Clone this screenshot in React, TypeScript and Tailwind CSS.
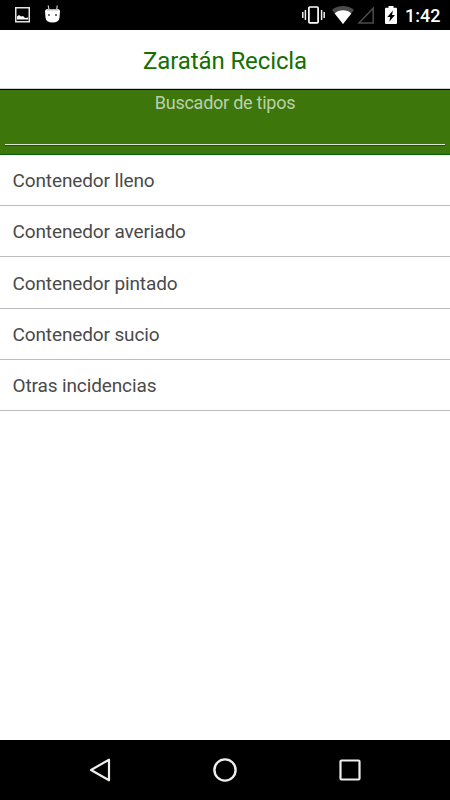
const incidentTypes = [
  "Contenedor lleno",
  "Contenedor averiado",
  "Contenedor pintado",
  "Contenedor sucio",
  "Otras incidencias",
];

function ImageIcon() {
  return (
    <svg width="16" height="16" viewBox="0 0 16 16" aria-hidden="true">
      <rect x="0.75" y="0.75" width="13.5" height="14" fill="none" stroke="#e4e4e0" strokeWidth="1.5" />
      <path d="M2 12.500V9.500L4 8l2 1.500L8 9l2 2 3-.5v2z" fill="#fff" />
    </svg>
  );
}

function AndroidIcon() {
  return (
    <svg width="16" height="18" viewBox="0 0 16 18" aria-hidden="true">
      <path d="M3.200 0.500l.7 4M12.300 0.500l-.7 4" stroke="#ccc" strokeWidth="1.200" />
      <path d="M0 6.500Q0 4 2.500 4h10Q15 4 15 6.500l-.5 6Q14 17.500 7.500 17.500T.5 12.500z" fill="#fff" />
      <path d="M1.500 5.500Q2 4 3.500 4h8q1.500 0 2 1.500z" fill="#b8b8b8" />
      <circle cx="4" cy="10" r="1" fill="#444" />
      <circle cx="11" cy="10" r="1" fill="#444" />
    </svg>
  );
}

function VibrateIcon() {
  return (
    <svg width="24" height="18" viewBox="0 0 24 18" aria-hidden="true">
      <rect x="6.900" y="1" width="9.200" height="15.800" rx="1" fill="none" stroke="#fff" strokeWidth="1.700" />
      <path d="M.8 6v6M3.400 4v10M19.600 4v10M22.200 6v6" stroke="#eee" strokeWidth="1.500" />
    </svg>
  );
}

function WifiIcon() {
  return (
    <svg width="22" height="18" viewBox="0 0 22 18" aria-hidden="true">
      <path d="M11 18L0 4Q4.500 0 11 0t11 4z" fill="#4b4b4b" />
      <path d="M11 18L2.700 7.500Q6 4.300 11 4.300t8.300 3.200z" fill="#fff" />
    </svg>
  );
}

function SignalIcon() {
  return (
    <svg width="18" height="18" viewBox="0 0 18 18" aria-hidden="true">
      <path d="M2 16.900L16.200 2.200v14.700z" fill="none" stroke="#4b4b4b" strokeWidth="1.500" />
    </svg>
  );
}

function BatteryIcon() {
  return (
    <svg width="12" height="18" viewBox="0 0 12 18" aria-hidden="true">
      <path d="M3.500 0h5v1.700H11q1 0 1 1V17q0 1-1 1H1q-1 0-1-1V2.700q0-1 1-1h2.500z" fill="#fff" />
      <path d="M8 4.500L2.300 11h2.900l-.9 4.700L9.900 9H7z" fill="#000" />
    </svg>
  );
}

function StatusBar() {
  return (
    <div className="flex h-[30px] shrink-0 items-center bg-black pl-[15px] pr-[10px] text-white">
      <ImageIcon />
      <div className="-mt-[3px] ml-[14px]">
        <AndroidIcon />
      </div>
      <div className="ml-auto flex items-center">
        <VibrateIcon />
        <div className="ml-[6px]">
          <WifiIcon />
        </div>
        <div className="ml-[3px]">
          <SignalIcon />
        </div>
        <div className="ml-[10px]">
          <BatteryIcon />
        </div>
        <span className="ml-[8px] w-[35px] whitespace-nowrap pt-px text-[18px] font-medium leading-[30px]">1:42</span>
      </div>
    </div>
  );
}

function NavigationBar() {
  return (
    <nav className="flex h-[60px] shrink-0 items-center justify-between bg-black px-[88px]">
      <button aria-label="Atrás">
        <svg width="24" height="24" viewBox="0 0 24 24" fill="none" stroke="#f0eeec" strokeWidth="2.200" strokeLinejoin="round">
          <path d="M3 12L21 1.700v20.600z" />
        </svg>
      </button>
      <button aria-label="Inicio">
        <svg width="24" height="24" viewBox="0 0 24 24" fill="none" stroke="#f0eeec" strokeWidth="2.400">
          <circle cx="12" cy="12" r="10.600" />
        </svg>
      </button>
      <button aria-label="Recientes">
        <svg width="24" height="24" viewBox="0 0 24 24" fill="none" stroke="#f0eeec" strokeWidth="2.200">
          <rect x="2.500" y="2.500" width="19" height="19" rx="1" />
        </svg>
      </button>
    </nav>
  );
}

export default function App() {
  return (
    <div className="flex h-[800px] w-[450px] flex-col overflow-hidden bg-white font-[Roboto,sans-serif]">
      <StatusBar />

      <header className="flex h-[59px] shrink-0 items-center justify-center border-b border-[#d0d0d0] pt-[3px]">
        <h1 className="text-[24px] leading-[30px] tracking-[-0.1px] text-[#147000]">Zaratán Recicla</h1>
      </header>

      <section className="flex h-[66px] shrink-0 flex-col border-t border-b border-t-black border-b-[#045f08] bg-[#3d760a] px-[5px]">
        <label
          htmlFor="search"
          className="h-[26px] text-center text-[18px] leading-[26px] tracking-[-0.25px] text-[#bdd0ab]"
        >
          Buscador de tipos
        </label>
        <input
          id="search"
          type="text"
          className="h-[29px] w-full border-b border-[#dce4d3] bg-transparent text-white shadow-[0_1px_0_#045f08] outline-none"
        />
      </section>

      <ul className="flex-1">
        {incidentTypes.map((type) => (
          <li
            key={type}
            className="flex h-[51.200px] items-center border-b border-[#bdbdbd] pl-[12.500px] pt-[2.600px] text-[19px] tracking-[-0.12px] text-[#4a4a4a]"
          >
            {type}
          </li>
        ))}
      </ul>

      <NavigationBar />
    </div>
  );
}
